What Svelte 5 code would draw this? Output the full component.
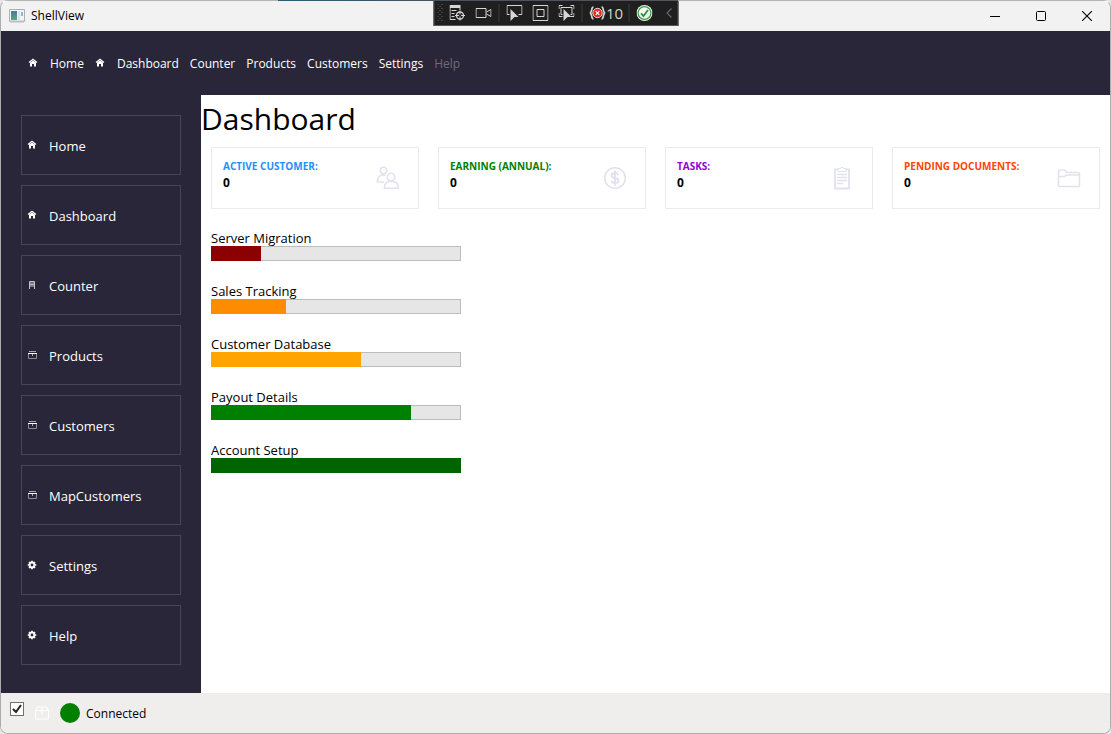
<script>
  const topLinks = [
    { label: 'Home', icon: 'home' },
    { label: 'Dashboard', icon: 'home' },
    { label: 'Counter' },
    { label: 'Products' },
    { label: 'Customers' },
    { label: 'Settings' },
    { label: 'Help', disabled: true },
  ];
  const sideLinks = [
    { label: 'Home', icon: 'home' },
    { label: 'Dashboard', icon: 'home' },
    { label: 'Counter', icon: 'calc' },
    { label: 'Products', icon: 'box' },
    { label: 'Customers', icon: 'box' },
    { label: 'MapCustomers', icon: 'box' },
    { label: 'Settings', icon: 'gear' },
    { label: 'Help', icon: 'gear' },
  ];
  const stats = [
    { label: 'ACTIVE CUSTOMER:', value: 0, color: '#1e90ff', icon: 'people' },
    { label: 'EARNING (ANNUAL):', value: 0, color: '#008000', icon: 'dollar' },
    { label: 'TASKS:', value: 0, color: '#9400d3', icon: 'clipboard' },
    { label: 'PENDING DOCUMENTS:', value: 0, color: '#ff4500', icon: 'folder' },
  ];
  const jobs = [
    { label: 'Server Migration', value: 20, color: '#8b0000' },
    { label: 'Sales Tracking', value: 30, color: '#ff8c00' },
    { label: 'Customer Database', value: 60, color: '#ffa500' },
    { label: 'Payout Details', value: 80, color: '#008000' },
    { label: 'Account Setup', value: 100, color: '#006400' },
  ];
  let online = $state(true);
</script>

{#snippet smallIcon(name)}
  <svg class="small-icon" viewBox="0 0 10 10" aria-hidden="true">
    {#if name === 'home'}
      <path d="M1 4.5 5 1.3 9 4.5" fill="none" stroke="#fff" stroke-width="1.2" />
      <path d="M2 4.6 5 2.4 8 4.6V8.5H6V6H4v2.5H2z" fill="#fff" />
    {:else if name === 'calc'}
      <path d="M2.5 9V1.5h5V9" fill="none" stroke="#c4c3ca" />
      <path d="M3 2h4v5H3z" fill="#77757f" />
      <path d="M3 4.500h4" stroke="#c4c3ca" />
    {:else if name === 'box'}
      <path d="M1.500 3v5.500h8V3" fill="none" stroke="#8d8b95" />
      <path d="M2 1.500h7M5.500 4v2" fill="none" stroke="#aaa8b0" />
      <path d="M1 3.500h9" stroke="#fff" />
    {:else}
      <circle cx="5" cy="5" r="2.4" fill="none" stroke="#fff" stroke-width="2" />
      <path d="M5 .7v1.6M5 7.7v1.6M.7 5h1.6M7.7 5h1.6M2 2l1 1M7 7l1 1M8 2 7 3M3 7 2 8" stroke="#fff" stroke-width="1.6" />
    {/if}
  </svg>
{/snippet}

{#snippet statIcon(name)}
  <svg class="stat-icon" viewBox="0 0 24 24" fill="none" stroke="#e2e2ee" stroke-width="1.6" aria-hidden="true">
    {#if name === 'people'}
      <circle cx="7.5" cy="4.5" r="3.2" />
      <path d="M8 16H1.500V14a5.500 5.500 0 0 1 8-4.500" />
      <circle cx="15" cy="11" r="3.7" />
      <path d="M8.500 22.200v-1.500c0-3 2.500-5.200 5-5.200h3c3 0 5.700 2.200 5.700 5.200v1.500z" />
    {:else if name === 'dollar'}
      <circle cx="12" cy="12" r="10.3" />
      <path d="M15.300 8.800C14.800 7.500 13.600 7 12 7c-2 0-3.300.9-3.300 2.400 0 3.600 6.800 1.600 6.800 5.100 0 1.600-1.400 2.500-3.500 2.500-1.900 0-3.200-.7-3.600-2.200M12 4.500V19.500" stroke-width="2" />
    {:else if name === 'clipboard'}
      <path d="M8 3.500H5v19h14V3.500H16" stroke-width="1.8" />
      <path d="M8 5.500v-3h2.300a1.800 1.800 0 0 1 3.400 0H16v3z" stroke-width="1" />
      <path d="M7 8.500h10M7 11.500h10M7 14.500h10M7 17.500h6" stroke-width="1.4" />
    {:else}
      <path d="M1.500 19.500V5.500q0-1.500 1.500-1.500h4.500l2 2.500h11.500q1.500 0 1.500 1.500v11.500q0 1-1 1h-19q-1 0-1-1zM1.500 10.500h6l2-1.500h13" />
    {/if}
  </svg>
{/snippet}

<div class="window">
  <div class="titlebar">
    <svg class="app-icon" width="16" height="14" viewBox="0 0 16 14" aria-hidden="true">
      <defs>
        <linearGradient id="pane" x1="0" y1="0" x2="0" y2="1">
          <stop offset="0" stop-color="#4a78a8" /><stop offset="1" stop-color="#58a878" />
        </linearGradient>
      </defs>
      <path d="M.5.5h15v12H.5z" fill="#f4f5f7" stroke="#a9b0b8" />
      <path d="M1 12.500h14" stroke="#b8bec5" stroke-width="2" />
      <path d="M2 2h6v9H2z" fill="url(#pane)" />
      <path d="M9 2h2v9H9z" fill="#dfe3e8" />
      <path d="M12 3h2v4h-2z" fill="#8bb9c4" />
    </svg>
    <span class="caption">ShellView</span>
    <div class="caption-buttons">
      <button aria-label="Minimize"><svg width="10" height="10" viewBox="0 0 10 10"><path d="M0 5.500h10" stroke="#000" /></svg></button>
      <button aria-label="Maximize"><svg width="10" height="10" viewBox="0 0 10 10"><rect x=".5" y=".5" width="9" height="9" rx="1" fill="none" stroke="#000" /></svg></button>
      <button aria-label="Close"><svg width="10" height="10" viewBox="0 0 10 10"><path d="M0 0l10 10M10 0 0 10" stroke="#000" stroke-width="1.1" /></svg></button>
    </div>
  </div>

  <div class="debug-bar" role="toolbar" aria-label="Debugging tools">
    <svg class="grip" width="6" height="18" viewBox="0 0 6 18" aria-hidden="true">
      <path d="M.5 0v18M4.500 0v18" stroke="#66666a" stroke-dasharray="1 3" /><path d="M2.500 2v16" stroke="#66666a" stroke-dasharray="1 3" />
    </svg>
    <button aria-label="Live visual tree">
      <svg width="16" height="16" viewBox="0 0 16 16" fill="none" stroke="#d6d6d6">
        <path d="M0 1.500h11" stroke-width="3" /><path d="M.5 3v11.500H6M10.500 3v2M2 5.500h5M2 8.500h3M2 11.500h3" />
        <circle cx="10.5" cy="10.5" r="3.5" stroke-width="1.3" /><path d="M10.500 5.500v4M10.500 11.500v4M5.500 10.500h4M11.500 10.500h4" />
      </svg>
    </button>
    <button aria-label="Record">
      <svg width="16" height="16" viewBox="0 0 16 16" fill="none" stroke="#d6d6d6"><path d="M.5 3.500h10v9H.5zM11 7l4.500-2.500v7L11 9" /></svg>
    </button>
    <i class="sep"></i>
    <button aria-label="Select element">
      <svg width="16" height="16" viewBox="0 0 16 16"><path d="M3 9.500H.5v-9h15v9H12" fill="none" stroke="#d6d6d6" /><path d="M4 4l8 8H8l-4 4z" fill="#d6d6d6" /></svg>
    </button>
    <button aria-label="Display layout adorners">
      <svg width="16" height="16" viewBox="0 0 16 16" fill="none" stroke="#d6d6d6"><path d="M.5.5h15v15H.5zM4.500 4.500h7v7h-7z" /></svg>
    </button>
    <button aria-label="Track focused element">
      <svg width="16" height="16" viewBox="0 0 16 16"><path d="M.5 4V.5H4M12 .5h3.500V4M.5 8v3.500H4M15.500 8v3.500H12M4 9.500H2.500v-7h11v7H12" fill="none" stroke="#d6d6d6" /><path d="M5 4l8 8H9l-4 4z" fill="#d6d6d6" /></svg>
    </button>
    <i class="sep"></i>
    <button class="failures" aria-label="Binding failures: 10">
      <svg width="16" height="16" viewBox="0 0 16 16" fill="none" stroke="#d6d6d6">
        <path d="M4 2C1.500 2 3 6 .8 8 3 10 1.500 14 4 14M12 2c2.500 0 1 4 3.200 6-2.200 2-.7 6-3.200 6" stroke-width="1.7" />
        <circle cx="8" cy="8" r="4.7" fill="#e8281c" stroke="#f1d3d0" /><path d="M6.200 6.200l3.600 3.600M9.800 6.200 6.200 9.800" stroke="#fff" stroke-width="1.2" />
      </svg>
      <span>10</span>
    </button>
    <i class="sep"></i>
    <button aria-label="Hot reload available">
      <svg width="16" height="16" viewBox="0 0 16 16"><circle cx="8" cy="8" r="8" fill="#e8efe8" /><circle cx="8" cy="8" r="6.4" fill="#f4f8f4" stroke="#3f9a45" stroke-width="1.2" /><path d="M4.500 8.300l2.500 2.700 4.500-6" fill="none" stroke="#2f9137" stroke-width="1.8" /></svg>
    </button>
    <button class="collapse" aria-label="Collapse">
      <svg width="8" height="10" viewBox="0 0 8 10"><path d="M6 .5 1.500 5 6 9.500" fill="none" stroke="#66666a" stroke-width="1.2" /></svg>
    </button>
  </div>

  <nav class="topnav" aria-label="Main menu">
    {#each topLinks as link}
      <button disabled={link.disabled}>
        {#if link.icon}{@render smallIcon(link.icon)}{/if}
        <span>{link.label}</span>
      </button>
    {/each}
  </nav>

  <div class="body">
    <nav class="sidebar" aria-label="Pages">
      {#each sideLinks as link}
        <button>{@render smallIcon(link.icon)}<span>{link.label}</span></button>
      {/each}
    </nav>

    <main>
      <h1>Dashboard</h1>
      <section class="stats">
        {#each stats as stat}
          <article>
            <div>
              <h2 style:color={stat.color}>{stat.label}</h2>
              <p>{stat.value}</p>
            </div>
            {@render statIcon(stat.icon)}
          </article>
        {/each}
      </section>
      <section class="jobs">
        {#each jobs as job, i}
          <div class="job">
            <label for="job-{i}">{job.label}</label>
            <progress id="job-{i}" max="100" value={job.value} style:--fill={job.color}></progress>
          </div>
        {/each}
      </section>
    </main>
  </div>

  <footer>
    <input type="checkbox" aria-label="Online" bind:checked={online} />
    <svg class="package" width="14" height="14" viewBox="0 0 14 14" fill="none" stroke="#fff" aria-hidden="true">
      <path d="M.5 4.500v8.500h13V4.500zM.5 4.500l1.500-3.500h10l1.500 3.500M7 1v8" />
    </svg>
    <i class="dot"></i>
    <span>Connected</span>
  </footer>
</div>

<style>
  :global(body) {
    margin: 0;
    background: #e6e6e6;
  }
  .window {
    position: relative;
    box-sizing: border-box;
    display: flex;
    flex-direction: column;
    min-height: 100vh;
    overflow: hidden;
    border: 1px solid #acacac;
    border-top-color: transparent;
    border-radius: 8px;
    background:
      linear-gradient(90deg, #b4b4b4 25%, #2c5f73 25%, #38566b 33%, #4b5260 40%, #55555a 61%, #b4b4b4 61%) top / 100% 1px no-repeat border-box,
      #fff;
    color: #000;
    font: 12px/16px 'Open Sans', 'Noto Sans', sans-serif;
  }
  button {
    display: flex;
    align-items: center;
    margin: 0;
    padding: 0;
    border: 0;
    background: none;
    color: inherit;
    font: inherit;
  }
  svg {
    display: block;
    flex: none;
  }
  .titlebar {
    display: flex;
    align-items: center;
    height: 30px;
    padding-left: 8px;
    background: #f2f2f2;
  }
  .caption {
    margin-left: 6px;
  }
  .caption-buttons {
    display: flex;
    align-self: stretch;
    margin-left: auto;
  }
  .caption-buttons button {
    justify-content: center;
    width: 46px;
  }
  .debug-bar {
    position: absolute;
    top: -1px;
    left: 50%;
    transform: translateX(-50%);
    box-sizing: border-box;
    display: flex;
    align-items: center;
    gap: 10px;
    width: 245px;
    height: 26px;
    padding: 0 4px 0 3px;
    border: 1px solid #55555a;
    background: #1f1f1f;
    color: #d6d6d6;
  }
  .grip {
    margin-right: -4px;
  }
  .sep {
    flex: none;
    width: 1px;
    height: 18px;
    margin: 0 -3px;
    background: #3d3d40;
  }
  .failures {
    gap: 1px;
    margin-right: -2px;
    font: 15px/18px 'Open Sans', 'Noto Sans', sans-serif;
  }
  .collapse {
    margin-left: auto;
  }
  .topnav {
    display: flex;
    align-items: center;
    gap: 11px;
    height: 64px;
    padding-left: 27px;
    background: #292639;
    color: #fff;
  }
  .topnav button {
    gap: 12px;
  }
  .topnav span,
  .sidebar span {
    padding-top: 2px;
  }
  .topnav button:disabled {
    color: #6d6b76;
  }
  .small-icon {
    width: 10px;
    height: 10px;
  }
  .body {
    display: flex;
    flex: 1;
  }
  .sidebar {
    display: flex;
    flex-direction: column;
    gap: 10px;
    box-sizing: border-box;
    width: 200px;
    padding: 20px 20px 28px;
    background: #292639;
    color: #fff;
  }
  .sidebar button {
    gap: 12px;
    height: 60px;
    padding-left: 5px;
    border: 1px solid #474457;
    font-size: 13px;
    line-height: 20px;
  }
  main {
    flex: 1;
    min-width: 0;
  }
  h1 {
    margin: 0;
    font-size: 30px;
    font-weight: 400;
    line-height: 48px;
  }
  .stats {
    display: grid;
    grid-template-columns: repeat(4, 1fr);
    gap: 19px;
    margin: 4px 10px 0;
  }
  article {
    display: flex;
    align-items: center;
    justify-content: space-between;
    box-sizing: border-box;
    height: 62px;
    padding: 0 18px 6px 11px;
    border: 1px solid #ebebeb;
  }
  h2,
  p {
    margin: 0;
    font-size: 10px;
    font-weight: 700;
    line-height: 16px;
  }
  p {
    font-size: 12px;
    line-height: 18px;
  }
  .stat-icon {
    width: 24px;
    height: 24px;
    margin-top: 6px;
  }
  .jobs {
    display: flex;
    flex-direction: column;
    gap: 22px;
    width: 250px;
    margin: 21px 10px;
  }
  .job {
    display: flex;
    flex-direction: column;
  }
  .job label {
    font-size: 13px;
  }
  progress {
    appearance: none;
    box-sizing: border-box;
    display: block;
    width: 100%;
    height: 15px;
    border: 0;
  }
  progress::-webkit-progress-bar {
    background: #e6e6e6;
    box-shadow: inset 0 0 0 1px #bcbcbc;
  }
  progress::-webkit-progress-value {
    background: var(--fill);
  }
  footer {
    display: flex;
    align-items: center;
    height: 40px;
    padding-left: 9px;
    background: #f0eded;
  }
  footer span {
    padding-top: 2px;
  }
  footer input {
    appearance: none;
    box-sizing: border-box;
    width: 14px;
    height: 14px;
    margin: 0 11px 9px 0;
    border: 1px solid #707070;
    background: #fff;
  }
  footer input:checked {
    background: #fff url("data:image/svg+xml,%3Csvg xmlns='http://www.w3.org/2000/svg' viewBox='0 0 12 12'%3E%3Cpath d='M2 6l3 3 5-7' fill='none' stroke='%23212121' stroke-width='2'/%3E%3C/svg%3E");
  }
  .dot {
    width: 20px;
    height: 20px;
    margin: 0 6px 0 11px;
    border-radius: 50%;
    background: #008000;
  }
</style>
